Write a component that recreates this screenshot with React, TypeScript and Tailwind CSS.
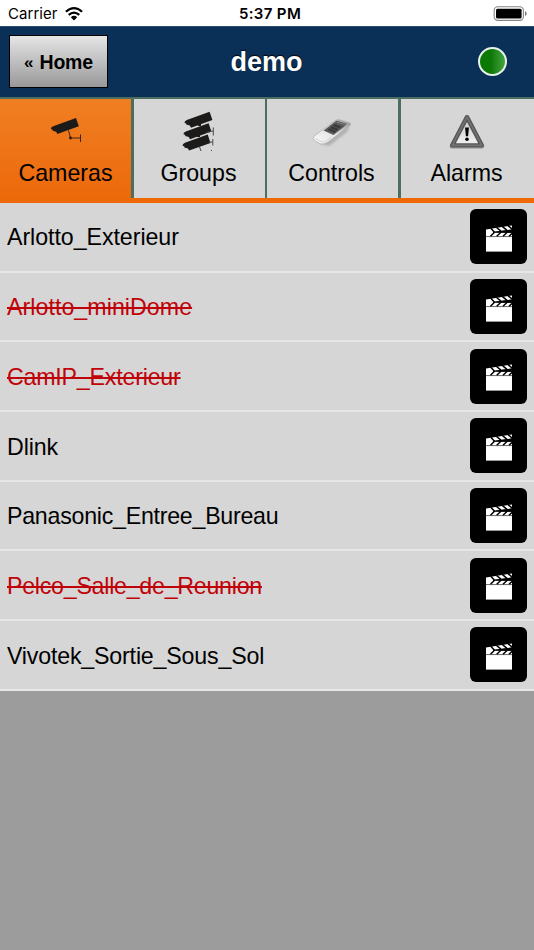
import type { ReactNode } from 'react';

const cameras = [
  { name: 'Arlotto_Exterieur', online: true, tracking: 'tracking-[-0.05px]' },
  { name: 'Arlotto_miniDome', online: false, tracking: 'tracking-[0.05px]' },
  { name: 'CamIP_Exterieur', online: false, tracking: 'tracking-[-0.2px]' },
  { name: 'Dlink', online: true, tracking: 'tracking-[-0.1px]' },
  {
    name: 'Panasonic_Entree_Bureau',
    online: true,
    tracking: 'tracking-[-0.25px]',
  },
  {
    name: 'Pelco_Salle_de_Reunion',
    online: false,
    tracking: 'tracking-[-0.25px]',
  },
  {
    name: 'Vivotek_Sortie_Sous_Sol',
    online: true,
    tracking: 'tracking-[-0.18px]',
  },
];

const CameraBody = () => (
  <path
    d="M3.2 9.2 26 1 28.8 9.3 7.4 17 6.2 14.8 2.6 13.8 2.6 12.6 1 12.3 1.2 10.6z"
    fill="#1c1b19"
  />
);

const CameraIcon = () => (
  <svg width="32" height="26" viewBox="0 0 32 26">
    <g transform="translate(0 -1)">
      <CameraBody />
      <path
        d="M18.5 13.5 20.5 21M20.5 21h10M30.5 17.5v7.5"
        fill="none"
        stroke="#3a2615"
        strokeWidth="1"
      />
      <circle cx="20.5" cy="21" r="1.4" fill="#2a1d12" />
    </g>
  </svg>
);

const GroupsIcon = () => (
  <svg width="34" height="42" viewBox="0 0 34 42">
    <g transform="translate(1.6 .8)">
      <CameraBody />
    </g>
    <g transform="translate(.6 12.2)">
      <CameraBody />
    </g>
    <g transform="translate(-.3 23.6)">
      <CameraBody />
    </g>
    <path
      d="M24.5 22.5 31 21M31.3 17.5v8M27 32h3.5M30.8 29v6.5M17.5 37l1.5 4M29 40.5h1"
      fill="none"
      stroke="#4a4a4a"
      strokeWidth="1"
    />
    <path d="M17.5 12v4M16.5 24v3" stroke="#1c1b19" strokeWidth="3" />
  </svg>
);

const ControlsIcon = () => (
  <svg className="mt-[3px]" width="44" height="32" viewBox="0 0 44 32">
    <defs>
      <linearGradient id="remote" x1="0" y1="1" x2="1" y2="0">
        <stop offset="0" stopColor="#fafafa" />
        <stop offset=".5" stopColor="#e4e4e4" />
        <stop offset="1" stopColor="#8e8e8e" />
      </linearGradient>
      <filter id="soft">
        <feGaussianBlur stdDeviation="1.2" />
      </filter>
    </defs>
    <path
      d="M8 26 19 29 37 15 40 8 22 18z"
      fill="#8c8c8c"
      opacity=".5"
      filter="url(#soft)"
    />
    <path
      d="M4 19 25.5 3.4Q27.5 2.2 29.5 2.8L39.5 5.7Q41.5 6.5 40 8.5L18 25Q14.5 27.5 11 27L5 24Q1.5 22 4 19z"
      fill="url(#remote)"
      stroke="#b1b1b1"
      strokeWidth=".8"
    />
    <path d="M13.5 13.4 26.5 3.8 36.8 6.8 34 9.8 23.5 18z" fill="#595959" />
    <path
      d="m18.5 12.2 7 2.5m-4.5-4.5 7 2.5M23.5 8l7 2.5"
      stroke="#383838"
      strokeWidth="2"
    />
    <path d="m26.5 5 8.5 2.6" stroke="#858585" strokeWidth="1" />
    <path
      d="m4.5 21.5 8 3.5q2 .5 3.5-1L21 20.5"
      fill="none"
      stroke="#c9c9c9"
      strokeWidth=".8"
    />
  </svg>
);

const AlarmIcon = () => (
  <svg className="mt-px" width="38" height="38" viewBox="0 0 38 38">
    <defs>
      <linearGradient id="alarm" x1="0" y1="0" x2="0" y2="1">
        <stop offset="0" stopColor="#c9c9c9" />
        <stop offset="1" stopColor="#f1f1f1" />
      </linearGradient>
    </defs>
    <path
      d="M19 4.5 33.8 33.2H4.2z"
      fill="none"
      stroke="#a5a5a5"
      strokeWidth="5"
      strokeLinejoin="round"
    />
    <path
      d="M19 4.2 33.8 32.4H4.2z"
      fill="url(#alarm)"
      stroke="#565656"
      strokeWidth="4.4"
      strokeLinejoin="round"
    />
    <path
      d="M19 4.2 33.8 32.4H4.2z"
      fill="none"
      stroke="#737373"
      strokeWidth="1.6"
      strokeLinejoin="round"
    />
    <path d="M17.1 14.4h3.8l-.8 8.8h-2.2z" fill="#000" />
    <circle cx="19" cy="26.2" r="1.8" fill="#000" />
  </svg>
);

// Two striped clapper sticks hinged on the left of a blank slate
const ClapIcon = () => (
  <svg width="28" height="28" viewBox="0 0 28 28">
    <path d="M1 12.8h26v14.8H1z" fill="#fff" />
    <path d="M1 5.4 27 1.5v4L8 8.2l19 .6v3.7H1z" fill="#fff" />
    <path d="M1 12.6h26" stroke="#666" strokeWidth=".8" />
    <path d="M8 7.8 27 5.5v3.3H8z" fill="#000" />
    <path
      d="m5.8 4.3 3.7 3.9m2-4.7 4.5 3.7m1.5-4.5 4.5 3.7m1.2-4.6 4.3 3.6M5.5 12.2l4-4m2.2 4 4.5-4.2m1.8 4.2 4.5-4.2m1.5 4.2 3-2.8"
      fill="none"
      stroke="#000"
      strokeWidth="1.5"
    />
  </svg>
);

const StatusBar = () => (
  <div className="grid h-[26px] grid-cols-3 items-center bg-white font-['Inter','Liberation_Sans',sans-serif] text-[15px] leading-none text-black">
    <div className="flex items-center gap-[7px] pt-px pl-2">
      <span className="tracking-[0.05px]">Carrier</span>
      <svg width="18" height="14" viewBox="0 0 18 14">
        <path
          d="M.9 4.8Q9-2.4 17.1 4.8M3.7 7.9Q9 3.4 14.3 7.9"
          fill="none"
          stroke="#000"
          strokeWidth="2.2"
        />
        <path d="M5.8 10.2Q9 7.4 12.2 10.2L9 13.4z" fill="#000" />
      </svg>
    </div>
    <div className="pt-px pl-[6px] text-center font-semibold tracking-[0.35px] whitespace-nowrap">
      5:37 PM
    </div>
    <div className="flex items-center justify-end pt-px pr-[6px]">
      <svg width="35" height="16" viewBox="0 0 35 16">
        <rect
          x="1.2"
          y=".8"
          width="29.2"
          height="13.6"
          rx="3.6"
          fill="none"
          stroke="#858585"
          strokeWidth="1.1"
        />
        <rect x="3" y="2.7" width="25.6" height="9.8" rx="1.5" fill="#000" />
        <path d="M32 5.2q1.7.5 1.7 2.4T32 10z" fill="#777" />
      </svg>
    </div>
  </div>
);

const Header = () => (
  <div className="grid h-[71px] grid-cols-3 items-center border-t border-[#2b4a6d] bg-[#0b3058] px-[9px] pb-[2px]">
    <button className="flex h-[53px] w-[99px] items-center justify-center gap-[6px] border-[1.5px] border-black bg-linear-to-b from-[#e6e6e6] to-[#999999] pt-[3px] text-[19.5px] font-bold text-black">
      <span className="text-[17px]">«</span>
      <span className="tracking-[-0.2px]">Home</span>
    </button>
    <h1 className="pt-[3px] pr-px text-center text-[27px] font-bold text-white [text-shadow:0_-1px_1px_#000]">
      demo
    </h1>
    <span className="mr-[18px] h-[29px] w-[29px] justify-self-end rounded-full border-2 border-[#e8f0ec] bg-linear-to-r from-[#0c7904] from-45% to-[#42a53e]" />
  </div>
);

type TabProps = {
  label: string;
  icon: ReactNode;
  active?: boolean;
};

const Tab = ({ label, icon, active }: TabProps) => (
  <div
    className={
      active
        ? 'flex flex-col items-center bg-linear-to-b from-[#f07f22] to-[#ec6807]'
        : 'flex flex-col items-center border-b-[5px] border-b-[#ef6806] bg-[#d6d6d6] pr-[2px]'
    }
  >
    <div className="flex h-[60px] w-full items-center justify-center pt-[4px]">
      {icon}
    </div>
    <span className="text-[23.2px] leading-[28px]">{label}</span>
  </div>
);

const Divider = () => (
  <div className="border-b-[5px] border-b-[#ef6806] bg-[#4c6e61]" />
);

const Tabs = () => (
  <div className="grid h-[106px] grid-cols-[131px_3px_131px_2px_131px_3px_133px] border-t-[2.5px] border-[#4c6e61]">
    <Tab label="Cameras" icon={<CameraIcon />} active />
    <Divider />
    <Tab label="Groups" icon={<GroupsIcon />} />
    <Divider />
    <Tab label="Controls" icon={<ControlsIcon />} />
    <Divider />
    <Tab label="Alarms" icon={<AlarmIcon />} />
  </div>
);

const App = () => {
  return (
    <div className="min-h-[950px] w-[534px] bg-[#9c9c9c] font-['Liberation_Sans',Arial,sans-serif] text-black">
      <StatusBar />
      <Header />
      <Tabs />
      <ul>
        {cameras.map(({ name, online, tracking }) => (
          <li
            key={name}
            className="flex h-[69.7px] items-center justify-between border-b-2 border-[#e6e6e6] bg-[#d6d6d6] pr-[7px] pl-[7px]"
          >
            <span
              className={
                online
                  ? `pt-[2px] text-[23.2px] ${tracking}`
                  : `pt-[2px] text-[23.2px] text-[#c00309] line-through decoration-[1.5px] ${tracking}`
              }
            >
              {name}
            </span>
            <button className="flex h-[55px] w-[57px] items-center justify-center rounded-[6px] bg-black pt-[2px]">
              <ClapIcon />
            </button>
          </li>
        ))}
      </ul>
    </div>
  );
};

export default App;
